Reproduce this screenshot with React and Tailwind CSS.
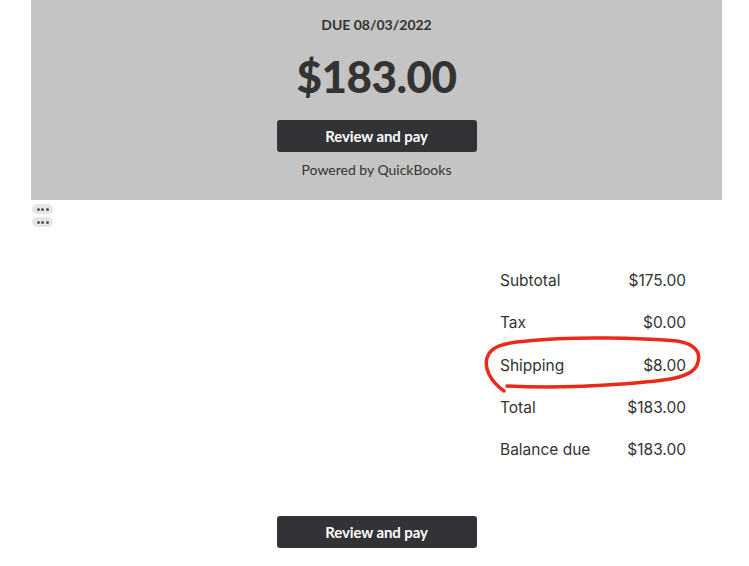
import React from 'react';

const rows = [
    { label: 'Subtotal', value: '$175.00' },
    { label: 'Tax', value: '$0.00' },
    { label: 'Shipping', value: '$8.00', circled: true },
    { label: 'Total', value: '$183.00' },
    { label: 'Balance due', value: '$183.00' },
];

function PayButton() {
    return (
        <button className="w-[200px] h-[32px] rounded-[3px] bg-[#333236] text-white text-[15px] font-bold tracking-[-0.1px]">
            Review and pay
        </button>
    );
}

function Dots() {
    return (
        <div className="w-[21px] h-[10px] rounded-full bg-[#e6e6ea] flex items-center justify-center gap-[1.5px]">
            <span className="w-[3px] h-[3px] rounded-full bg-[#555]" />
            <span className="w-[3px] h-[3px] rounded-full bg-[#555]" />
            <span className="w-[3px] h-[3px] rounded-full bg-[#555]" />
        </div>
    );
}

// hand-drawn annotation around the shipping row
function RedCircle() {
    return (
        <svg className="absolute left-[-18px] top-[-22px] pointer-events-none" width="224" height="64" viewBox="0 0 224 64" fill="none">
            <path
                d="M22 58 C8 48 2 35 5 25 C8 14 20 10 45 8 C90 3 160 5 195 8 C214 11 220 20 215 32 C209 46 180 48 140 51 C100 54 60 55 25 53"
                stroke="#ea2a17"
                strokeWidth="3.5"
                strokeLinecap="round"
                strokeLinejoin="round"
            />
        </svg>
    );
}

export default function App() {
    return (
        <div className="w-[749px] h-[566px] bg-white text-[#333333]" style={{ fontFamily: 'Lato, "Open Sans", Arial, sans-serif' }}>
            <div className="ml-[31px] w-[691px] h-[200px] bg-[#c4c4c4] flex flex-col items-center">
                <p className="mt-[16px] text-[14px] font-bold leading-[18px]">DUE 08/03/2022</p>
                <p className="mt-[16px] text-[44px] font-black leading-[52px] tracking-[-0.5px]">$183.00</p>
                <div className="mt-[18px]">
                    <PayButton />
                </div>
                <p className="mt-[8px] text-[14px] leading-[20px]">Powered by QuickBooks</p>
            </div>

            <div className="ml-[32px] mt-[4px] flex flex-col gap-[3px]">
                <Dots />
                <Dots />
            </div>

            <div className="ml-[31px] w-[691px] flex justify-end pr-[36px] mt-[43px]">
                <div className="w-[186px] flex flex-col gap-[20.25px]" style={{ fontFamily: 'Inter, Lato, Arial, sans-serif' }}>
                    {rows.map(row => (
                        <div key={row.label} className="relative flex justify-between text-[15.5px] leading-[22px]">
                            {row.circled && <RedCircle />}
                            <span>{row.label}</span>
                            <span>{row.value}</span>
                        </div>
                    ))}
                </div>
            </div>

            <div className="flex justify-center mt-[55px] pl-[4px]">
                <PayButton />
            </div>
        </div>
    );
}
